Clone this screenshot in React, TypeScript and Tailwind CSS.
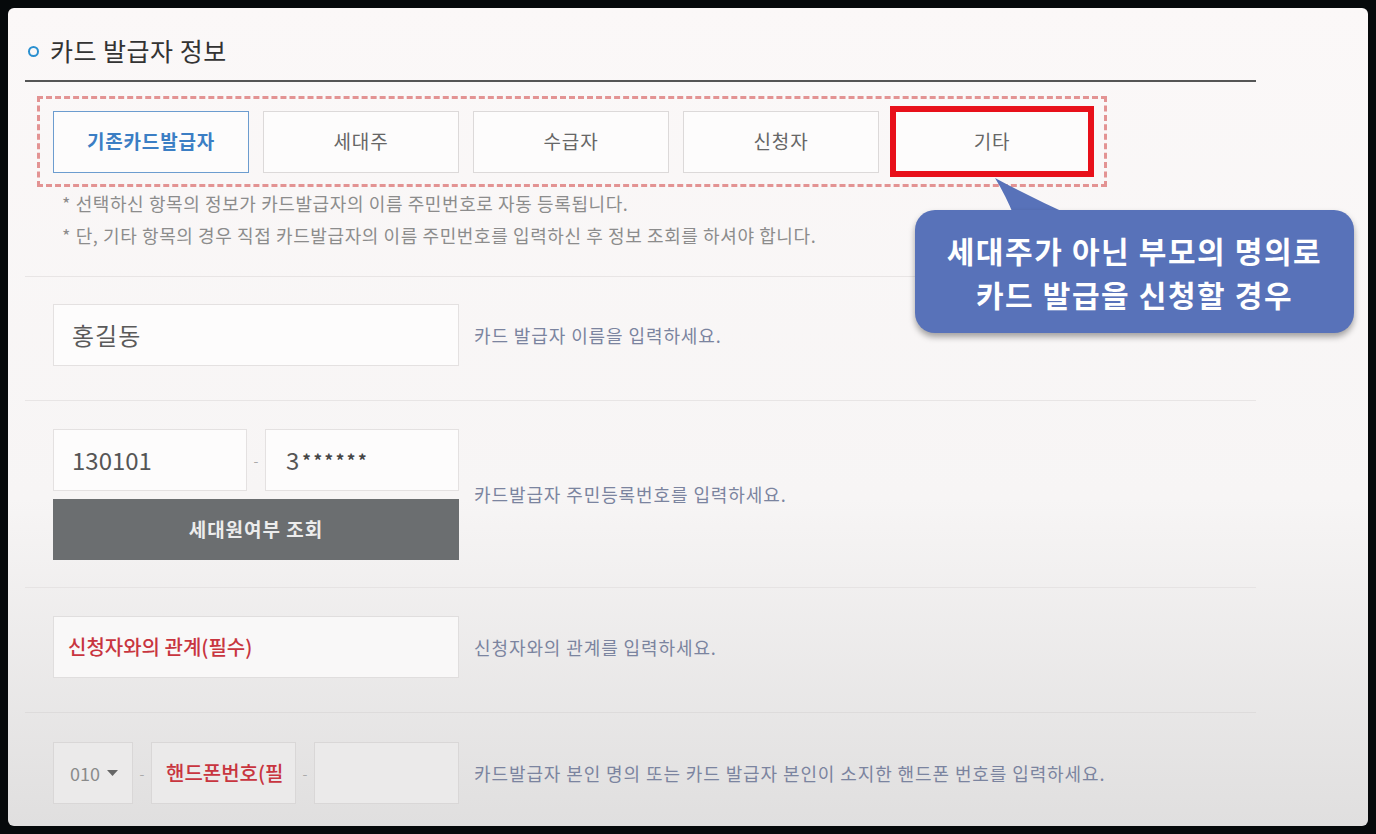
import React from 'react';

const tabs = ['기존카드발급자', '세대주', '수급자', '신청자'];

const Box: React.FC<{ className?: string; children?: React.ReactNode }> = ({ className = '', children }) => (
	<div className={`h-[62px] border flex items-center ${className}`}>{children}</div>
);

const Help: React.FC<{ children: React.ReactNode }> = ({ children }) => (
	<p className="text-[18px] text-[#7b849f] tracking-[0.9px]">{children}</p>
);

export default function App() {
	return (
		<div className="w-[1376px] h-[834px] bg-[#06090b] p-2 font-['Noto_Sans_CJK_KR',sans-serif]">
			<div className="relative h-full rounded-[6px] overflow-hidden bg-linear-to-b from-[#fbf8f8] via-[#f7f5f5] via-60% to-[#e0dfdf]">
				<div className="ml-[17px] w-[1231px]">
					{/* section title */}
					<div className="h-[74px] pt-[14px] border-b-2 border-[#555] flex items-center gap-[11px] pl-[3px]">
						<span className="w-[11px] h-[11px] rounded-full border-[2.5px] border-[#2b90d0]" />
						<h2 className="text-[25px] text-[#333] tracking-[0.5px]">카드 발급자 정보</h2>
					</div>

					{/* issuer type tabs */}
					<div className="mt-[14px] ml-[12px] w-[1070px] h-[91px] border-[3px] border-dashed border-[#e39393] flex items-center gap-[14px] pl-[13px]">
						{tabs.map((t, i) => (
							<button
								key={t}
								className={`w-[196px] h-[62px] bg-[#fdfcfc] text-[19px] tracking-[0.8px] ${
									i === 0
										? 'border-[1.5px] border-[#6c9ccf] text-[#3b7ec4] font-bold'
										: 'border border-[#dcd9d9] text-[#666]'
								}`}
							>
								{t}
							</button>
						))}
						<div className="-ml-[3px] w-[204px] h-[71px] border-[6px] border-[#e8101a] bg-[#fdfcfc] flex items-center justify-center text-[19px] tracking-[0.8px] text-[#666]">
							기타
						</div>
					</div>

					<div className="pl-[37px] text-[18px] leading-[32px] text-[#8c8c8c] tracking-[0.6px]">
						<p>* 선택하신 항목의 정보가 카드발급자의 이름 주민번호로 자동 등록됩니다.</p>
						<p>* 단, 기타 항목의 경우 직접 카드발급자의 이름 주민번호를 입력하신 후 정보 조회를 하셔야 합니다.</p>
					</div>

					{/* name */}
					<div className="mt-[25px] border-t border-[#e8e5e5] pt-[27px] pb-[34px] pl-[28px] flex items-center gap-[15px]">
						<Box className="w-[406px] pl-[18px] text-[24px] tracking-[1px] text-[#5a5a5a] border-[#e4e1e1] bg-[#fdfcfc]">홍길동</Box>
						<Help>카드 발급자 이름을 입력하세요.</Help>
					</div>

					{/* resident number */}
					<div className="border-t border-[#e8e5e5] pt-[28px] pb-[27px] pl-[28px] flex items-center gap-[15px]">
						<div className="w-[406px]">
							<div className="flex items-center">
								<Box className="w-[194px] pl-[18px] text-[24px] text-[#555] border-[#e4e1e1] bg-[#fdfcfc]">130101</Box>
								<span className="flex-1 text-center text-[#aaa] text-[14px]">-</span>
								<Box className="w-[194px] pl-[20px] text-[24px] text-[#555] border-[#e4e1e1] bg-[#fdfcfc]">
									3<span className="text-[17px] font-bold tracking-[2.5px] ml-[3px] text-[#444]">******</span>
								</Box>
							</div>
							<button className="mt-[8px] w-full h-[61px] bg-[#6b6e70] text-[19px] tracking-[1px] font-bold text-[#ececec]">
								세대원여부 조회
							</button>
						</div>
						<Help>카드발급자 주민등록번호를 입력하세요.</Help>
					</div>

					{/* relation */}
					<div className="border-t border-[#e6e3e3] pt-[28px] pb-[34px] pl-[28px] flex items-center gap-[15px]">
						<Box className="w-[406px] pl-[14px] text-[20px] font-medium text-[#c8353f] border-[#e0dede] bg-[#f9f8f8]">신청자와의 관계(필수)</Box>
						<Help>신청자와의 관계를 입력하세요.</Help>
					</div>

					{/* phone */}
					<div className="border-t border-[#dddbdb] pt-[29px] pl-[28px] flex items-center gap-[15px]">
						<div className="w-[406px] flex items-center">
							<Box className="w-[80px] h-[61px] pl-[16px] gap-[7px] text-[18px] text-[#8a8a8a] border-[#d9d7d7] bg-[#ebeaea]">
								010
								<svg width="11" height="7" viewBox="0 0 11 7">
									<path d="M0 0h11L5.5 6z" fill="#666" />
								</svg>
							</Box>
							<span className="w-[18px] text-center text-[#aaa] text-[14px]">-</span>
							<Box className="w-[145px] h-[61px] pl-[14px] overflow-hidden whitespace-nowrap text-[20px] font-medium text-[#c8353f] border-[#d9d7d7] bg-[#ebeaea]">
								핸드폰번호(필
							</Box>
							<span className="w-[18px] text-center text-[#aaa] text-[14px]">-</span>
							<Box className="w-[145px] h-[61px] border-[#d9d7d7] bg-[#ebeaea]" />
						</div>
						<Help>카드발급자 본인 명의 또는 카드 발급자 본인이 소지한 핸드폰 번호를 입력하세요.</Help>
					</div>
				</div>

				{/* callout */}
				<svg className="absolute left-[984px] top-[168px]" width="84" height="40" viewBox="0 0 84 40">
					<path d="M3 2 Q14 20 22 40 L80 40 Q40 22 3 2z" fill="#5872b9" />
				</svg>
				<div className="absolute left-[907px] top-[202px] w-[439px] h-[123px] rounded-[20px] bg-[#5872b9] shadow-[0_4px_6px_rgba(0,0,0,0.35)] flex flex-col items-center justify-center text-white text-[30px] font-bold leading-[44px] tracking-[1.6px]">
					<p>세대주가 아닌 부모의 명의로</p>
					<p>카드 발급을 신청할 경우</p>
				</div>
			</div>
		</div>
	);
}
